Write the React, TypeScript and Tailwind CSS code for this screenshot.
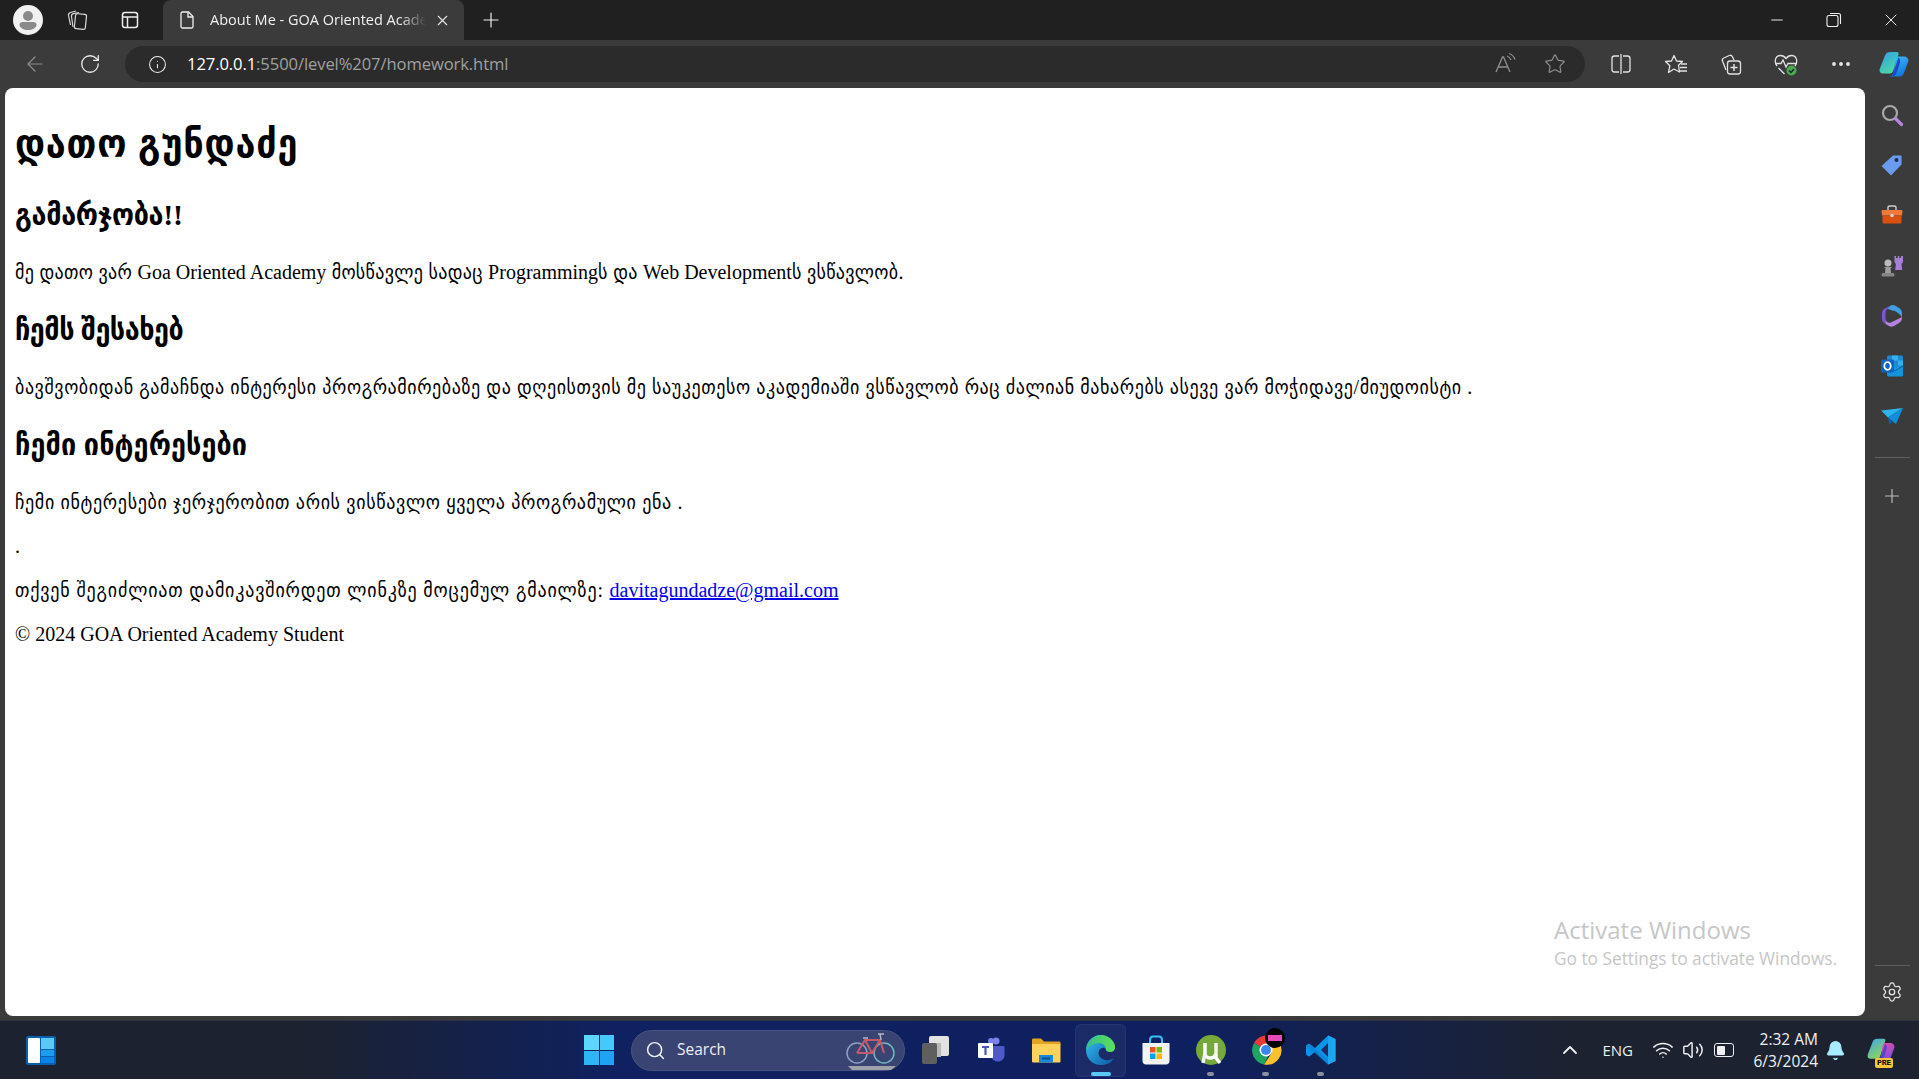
import { ArrowLeft, ChevronUp, Info, Minus, MoreHorizontal, Plus, RotateCw, Search, Settings, Star, Volume2, Wifi, X, Bell } from 'lucide-react'
import type { ReactNode } from 'react'

const uiFont = "font-['Open_Sans','Noto_Sans',sans-serif]"

function ToolSlot({ children, w = 'w-[55px]' }: { children: ReactNode; w?: string }) {
  return <div className={`${w} h-full flex items-center justify-center flex-shrink-0`}>{children}</div>
}

function Svg({ size = 24, children, box = '0 0 24 24' }: { size?: number; children: ReactNode; box?: string }) {
  return <svg width={size} height={size} viewBox={box} fill="none">{children}</svg>
}

function TitleBar() {
  return (
    <div className="h-10 bg-[#202020] flex items-end flex-shrink-0 text-white">
      <div className="w-[56px] h-10 flex items-center justify-center">
        <Svg size={30} box="0 0 30 30">
          <circle cx="15" cy="15" r="15" fill="#f2f2f2" />
          <circle cx="15" cy="11" r="5" fill="#8a8a8a" />
          <path d="M6.5 19.5c0-1.500 1.500-2.500 3-2.500h11c1.500 0 3 1 3 2.500 0 3.500-4 5.500-8.500 5.500s-8.500-2-8.500-5.500z" fill="#8a8a8a" />
        </Svg>
      </div>
      <div className="w-[44px] h-10 flex items-center justify-center">
        <Svg size={24}>
          <rect x="9" y="6" width="11" height="15" rx="2" stroke="#d8d8d8" strokeWidth="1.200" transform="rotate(6 14 13)" />
          <path d="M7 19 5.500 8.500c-.2-1.500.5-2.500 2-2.800L13 4.500" stroke="#d8d8d8" strokeWidth="1.200" />
          <path d="M4.500 17 2.500 7.500C2.200 6 3 5 4.500 4.500L10 3" stroke="#d8d8d8" strokeWidth="1.200" />
        </Svg>
      </div>
      <div className="w-[60px] mr-[3px] h-10 flex items-center justify-center">
        <Svg size={20} box="0 0 20 20">
          <rect x="2.500" y="2.500" width="15" height="15" rx="2.500" stroke="#ededed" strokeWidth="1.500" />
          <path d="M3 7h14" stroke="#ededed" strokeWidth="1.500" />
          <path d="M7.500 7v10" stroke="#ededed" strokeWidth="1.500" />
        </Svg>
      </div>
      <div className="w-[301px] h-10 bg-[#3b3b3b] rounded-t-lg flex items-center pl-[14px] pr-[9px] flex-shrink-0">
        <Svg size={20} box="0 0 20 20">
          <path d="M4 3.500c0-.8.700-1.500 1.500-1.500h6L16 6.500v10c0 .8-.7 1.500-1.500 1.500h-9c-.8 0-1.500-.7-1.500-1.500z" stroke="#f0f0f0" strokeWidth="1.300" />
          <path d="M11 2v5h5" stroke="#f0f0f0" strokeWidth="1.300" />
        </Svg>
        <div className={`${uiFont} ml-[13px] w-[216px] overflow-hidden whitespace-nowrap text-[14.500px] leading-[22px] text-[#f0f0f0] [mask-image:linear-gradient(90deg,#000_88%,transparent)]`}>
          About Me - GOA Oriented Academy Student
        </div>
        <X className="ml-[8px] w-[17px] h-[17px] text-[#e8e8e8]" strokeWidth={1.500} />
      </div>
      <div className="w-[54px] h-10 flex items-center justify-center">
        <Plus className="w-[24px] h-[24px] text-[#f0f0f0]" strokeWidth={1.200} />
      </div>
      <div className="flex-1" />
      <div className="h-10 flex items-center">
        <ToolSlot w="w-[57px]"><Minus className="w-[18px] h-[18px]" strokeWidth={1.200} /></ToolSlot>
        <ToolSlot w="w-[58px]">
          <Svg size={16} box="0 0 16 16">
            <rect x="1" y="3.500" width="11" height="11" rx="2" stroke="#f0f0f0" strokeWidth="1.100" />
            <path d="M4 1.500h8.500c1.200 0 2 .8 2 2V12" stroke="#f0f0f0" strokeWidth="1.100" />
          </Svg>
        </ToolSlot>
        <ToolSlot w="w-[56px]"><X className="w-[20px] h-[20px]" strokeWidth={1.100} /></ToolSlot>
      </div>
    </div>
  )
}

function CopilotLogo({ size = 30, pre }: { size?: number; pre?: boolean }) {
  const a = pre ? 'copPreA' : 'copA'
  const b = pre ? 'copPreB' : 'copB'
  return (
    <Svg size={size} box="0 0 30 30">
      <defs>
        <linearGradient id={a} x1="0" y1="0" x2="0.6" y2="1">
          <stop offset="0" stopColor={pre ? '#38a8f0' : '#2d9ee8'} />
          <stop offset="1" stopColor={pre ? '#8ed45a' : '#4fd8a4'} />
        </linearGradient>
        <linearGradient id={b} x1="0" y1="0" x2="0.5" y2="1">
          <stop offset="0" stopColor={pre ? '#f0509a' : '#3ec4f6'} />
          <stop offset="1" stopColor={pre ? '#7a4ee0' : '#1478e0'} />
        </linearGradient>
      </defs>
      <path d="M11 3h7c1.500 0 2 1 1.500 2.500L14 22c-.5 1.500-1.500 2.500-3 2.500H4c-2.500 0-4-2-3.300-4.500L6 6.500C6.800 4 8.500 3 11 3z" fill={`url(#${a})`} />
      <path d="M19 7.500h6c3 0 5 2.500 4.300 5L25 24c-.7 2-2.500 3.500-4.500 3.500H9.500c2.500 0 4-1 4.800-3.500L17 9.500c.3-1 1-2 2-2z" fill={`url(#${b})`} />
      <path d="M19.500 8.500c1.500 1 2 3 1.500 5L18 23c-.7 2.500-2.500 4.500-6 4.500h-2.500c2.500 0 4-1 4.800-3.500z" fill={pre ? '#5a3ed0' : '#1d48c8'} />
    </Svg>
  )
}

function NavBar() {
  return (
    <div className="h-12 bg-[#3b3b3b] flex items-center flex-shrink-0">
      <ToolSlot w="w-[69px]"><ArrowLeft className="w-[24px] h-[24px] text-[#8c8c8c]" strokeWidth={1.200} /></ToolSlot>
      <ToolSlot w="w-[42px]"><RotateCw className="w-[22px] h-[22px] text-[#eeeeee]" strokeWidth={1.400} /></ToolSlot>
      <div className="ml-[14px] w-[1460px] flex-shrink-0 h-[36px] rounded-full bg-[#2b2b2b] flex items-center pl-[23px] pr-[19px]">
        <Info className="w-[19px] h-[19px] text-[#eeeeee]" strokeWidth={1.300} />
        <div className={`${uiFont} ml-[20px] text-[16.600px] tracking-[-0.1px] whitespace-nowrap text-[#a0a0a0]`}>
          <span className="text-white">127.0.0.1</span>:5500/level%207/homework.html
        </div>
        <div className="flex-1" />
        <Svg size={24}>
          <path d="M3 20 9.500 5h1L17 20M5.500 15h9" stroke="#8e8e8e" strokeWidth="1.300" />
          <path d="M14 4c2 .7 3.300 2 4 4M16 1.500c3 1 5 3 6 6" stroke="#8e8e8e" strokeWidth="1.300" />
        </Svg>
        <div className="ml-[27px]"><Star className="w-[22px] h-[22px] text-[#8e8e8e]" strokeWidth={1.300} /></div>
      </div>
      <div className="ml-[8px] flex items-center h-full">
        <ToolSlot>
          <Svg size={24}>
            <path d="M10 4H5.500C4 4 3 5 3 6.500v11C3 19 4 20 5.500 20H10M14 4h4.500C20 4 21 5 21 6.500v11c0 1.500-1 2.500-2.500 2.500H14M12 2v20" stroke="#e2e2e2" strokeWidth="1.300" />
          </Svg>
        </ToolSlot>
        <ToolSlot>
          <Svg size={24}>
            <path d="M10 3.500 12.500 9l6 .5-4 3.800L15.500 20 10 17l-5.500 3.500 1.400-6.800L1.500 9.500 7.500 9z" stroke="#e2e2e2" strokeWidth="1.300" strokeLinejoin="round" />
            <path d="M17 12h6M16 15.500h7M15 19h8" stroke="#e2e2e2" strokeWidth="1.300" />
          </Svg>
        </ToolSlot>
        <ToolSlot>
          <Svg size={24}>
            <path d="M7 18 3.500 9c-.5-1.300 0-2.500 1.300-3l5.500-2.500c1.300-.5 2.500 0 3 1L15 8" stroke="#e2e2e2" strokeWidth="1.300" />
            <rect x="8.500" y="9" width="13" height="13" rx="2.500" stroke="#e2e2e2" strokeWidth="1.300" />
            <path d="M15 12v7M11.500 15.500h7" stroke="#e2e2e2" strokeWidth="1.500" />
          </Svg>
        </ToolSlot>
        <ToolSlot>
          <Svg size={26} box="0 0 26 26">
            <path d="M4 15C1 11 2 5 7 4.500c2.500-.2 4.500 1 6 3 1.500-2 3.500-3.200 6-3 5 .5 6 6.500 3 10.500" stroke="#e2e2e2" strokeWidth="1.300" />
            <path d="M2 12.500h6l2-3.500 3 7 2-3.500h8M5.500 17l6 6" stroke="#e2e2e2" strokeWidth="1.300" />
            <circle cx="18.500" cy="19.500" r="5" fill="#4aa84f" />
            <path d="m16 19.500 2 2 3-3.500" stroke="#123" strokeWidth="1.300" />
          </Svg>
        </ToolSlot>
        <ToolSlot><MoreHorizontal className="w-[24px] h-[24px] text-[#e6e6e6]" strokeWidth={1.800} /></ToolSlot>
        <ToolSlot w="w-[51px]"><CopilotLogo /></ToolSlot>
      </div>
    </div>
  )
}

function SideIcon({ children }: { children: ReactNode }) {
  return <div className="h-[50.200px] w-full flex items-center justify-center flex-shrink-0">{children}</div>
}

function SideBar() {
  return (
    <div className="w-[54px] flex-shrink-0 bg-[#3b3b3b] flex flex-col items-center pt-[2px]">
      <SideIcon>
        <Svg size={24}>
          <circle cx="10" cy="10" r="7" stroke="#a8a8a8" strokeWidth="2.200" />
          <path d="m15.500 15.500 6 6" stroke="#b287dc" strokeWidth="3.200" strokeLinecap="round" />
        </Svg>
      </SideIcon>
      <SideIcon>
        <Svg size={24}>
          <path d="M13 2.500h8.500v9L11 22.500 1.500 13z" fill="#6a9bee" strokeLinejoin="round" />
          <circle cx="16.500" cy="7" r="2" fill="#1c2c55" />
        </Svg>
      </SideIcon>
      <SideIcon>
        <Svg size={24}>
          <path d="M8 7V4.500C8 3.500 9 3 10 3h4c1 0 2 .5 2 1.500V7" stroke="#cfcfcf" strokeWidth="1.400" />
          <path d="M1.500 8.500C1.500 7.500 2 7 3 7h18c1 0 1.500.5 1.500 1.500l-.5 4H2z" fill="#ef7a3a" />
          <path d="M2.500 12.500h19V19c0 1-.5 1.500-1.500 1.500H4c-1 0-1.500-.5-1.500-1.500z" fill="#d9500f" />
          <circle cx="12" cy="12.500" r="1.800" fill="#d5d5d5" />
        </Svg>
      </SideIcon>
      <SideIcon>
        <Svg size={24}>
          <path d="M14.500 2h1.500v2h1.800V2h1.500v2h1.700V2H23v6l-1.500 2 .7 6h-7l.7-6-1.400-2z" fill="#a77fd9" />
          <circle cx="8" cy="9" r="3.500" fill="#bbbbbb" />
          <path d="M4.500 13.500h7M6 14l-.5 5h5L10 14z" fill="#9d9d9d" stroke="#9d9d9d" />
          <rect x="1.500" y="19" width="13" height="3.500" rx="1.500" fill="#858585" />
        </Svg>
      </SideIcon>
      <SideIcon>
        <Svg size={24}>
          <path d="M10.500 1.500 5 4.500C3 5.500 2 7 2 9v6c0 2 1 3.500 3 4.500l.5.300V9c0-2 1-3.500 2.500-4.500z" fill="#7a55d6" />
          <path d="M10.500 1.500c1.500-.7 3-.7 4.500 0l4 2.500c2 1 3 3 3 5v5c-.5-2-1.500-3-3-4L12 6.500C10.500 5.500 9 5 7.500 5z" fill="#3f9fe2" />
          <path d="M5.500 15c0 3 3.500 4.500 5.500 3.500L22 13c0 3-.5 4.500-3 6l-5 3c-2 1-3.500 1-5 0l-3.500-2z" fill="#b684e0" />
          <path d="M8.500 9 14 6.500c1.500 1 4 2 4.500 3.500L13 13.500c-.5-2-3-3-4.500-4.500z" fill="#3c3c3c" />
        </Svg>
      </SideIcon>
      <SideIcon>
        <Svg size={24}>
          <rect x="7" y="1.500" width="16" height="15" rx="1.500" fill="#1a8ad6" />
          <path d="M12 1.500h6v5h-6zM18 6.500h5v5h-5z" fill="#38b0ea" />
          <path d="M7 12h16v9c0 .8-.7 1.500-1.500 1.500h-13C7.700 22.500 7 21.800 7 21z" fill="#1793de" />
          <path d="m7 12 8 5 8-5" stroke="#0d5eae" strokeWidth="1" />
          <rect x="1" y="5.500" width="13" height="13" rx="1.500" fill="#0a64c0" />
          <ellipse cx="7.500" cy="12" rx="3.200" ry="3.800" stroke="#ffffff" strokeWidth="1.800" />
        </Svg>
      </SideIcon>
      <SideIcon>
        <Svg size={24}>
          <path d="M1 6.500 23 4 8 13.500z" fill="#2db4ee" />
          <path d="M23 4 8 13.500 16 20z" fill="#0f8edc" />
          <path d="m8 13.500 1.500 7.500 3-3.500z" fill="#0b5fb4" />
        </Svg>
      </SideIcon>
      <div className="w-[35px] h-px bg-[#5f5f5f] mt-[16px]" />
      <div className="mt-[27px]"><Plus className="w-[22px] h-[22px] text-[#bdbdbd]" strokeWidth={1.300} /></div>
      <div className="flex-1" />
      <div className="w-[35px] h-px bg-[#5f5f5f]" />
      <div className="mt-[15px] mb-[13px]"><Settings className="w-[22px] h-[22px] text-[#ededed]" strokeWidth={1.300} /></div>
    </div>
  )
}

// Latin runs keep the serif's normal spacing, only the Georgian runs are tracked out
function Lat({ children }: { children: ReactNode }) {
  return <span className="tracking-normal">{children}</span>
}

function Content() {
  const heading = 'font-bold text-[30px] leading-[41px] mt-[25px] mb-[25px]'
  const para = 'text-[20px] leading-[24px] mt-[20px] mb-[20px]'
  return (
    <div className="relative flex-1 bg-white rounded-lg px-[10px] py-[1px] font-['Liberation_Serif','DejaVu_Sans',serif] font-stretch-condensed text-black overflow-hidden">
      <h1 className="font-bold text-[40px] leading-[47px] mt-[31px] mb-[27px] tracking-[0.8px]">დათო გუნდაძე</h1>
      <h2 className={`${heading} tracking-[-0.3px]`}>გამარჯობა!!</h2>
      <p className={`${para} tracking-[0.32px]`}>მე დათო ვარ <Lat>Goa Oriented Academy</Lat> მოსწავლე სადაც <Lat>Programming</Lat>ს და <Lat>Web Development</Lat>ს ვსწავლობ.</p>
      <h2 className={`${heading} tracking-[-0.5px]`}>ჩემს შესახებ</h2>
      <p className={`${para} tracking-[0.58px]`}>ბავშვობიდან გამაჩნდა ინტერესი პროგრამირებაზე და დღეისთვის მე საუკეთესო აკადემიაში ვსწავლობ რაც ძალიან მახარებს ასევე ვარ მოჭიდავე/მიუდოისტი .</p>
      <h2 className={`${heading} tracking-[0.1px]`}>ჩემი ინტერესები</h2>
      <p className={`${para} tracking-[0.66px]`}>ჩემი ინტერესები ჯერჯერობით არის ვისწავლო ყველა პროგრამული ენა .</p>
      <p className={para}>.</p>
      <p className={`${para} tracking-[0.83px]`}>თქვენ შეგიძლიათ დამიკავშირდეთ ლინკზე მოცემულ გმაილზე: <a href="#" className="text-[#0000ee] underline tracking-normal">davitagundadze@gmail.com</a></p>
      <p className={para}>© 2024 GOA Oriented Academy Student</p>
      <div className={`${uiFont} font-stretch-normal absolute left-[1549px] top-[825px] text-[#c6c6c6] whitespace-nowrap`}>
        <div className="text-[24px] leading-[34px]">Activate Windows</div>
        <div className="text-[17.300px] leading-[24px]">Go to Settings to activate Windows.</div>
      </div>
    </div>
  )
}

function Taskbar() {
  return (
    <div className="h-[59px] flex-shrink-0 flex items-center bg-[linear-gradient(90deg,#1c2230_0%,#1c2230_16%,#0f2160_32%,#0e2060_62%,#1c2230_82%,#1c2230_100%)] text-white border-t border-[#2f3442]">
      <div className="ml-[26px] w-[30px] h-[29px] rounded-[2px] bg-[#0b5fb0] flex p-[2px] gap-[1px] flex-shrink-0">
        <div className="w-[12px] bg-white rounded-[1px]" />
        <div className="flex-1 flex flex-col gap-[1px]">
          <div className="flex-[2] bg-[#5cc8f8]" />
          <div className="flex-1 bg-[#1d9bf0]" />
          <div className="flex-1 bg-[#0a84e8]" />
        </div>
      </div>
      <div className="ml-[528px] w-[30px] h-[30px] grid grid-cols-2 gap-[1px] flex-shrink-0">
        <div className="bg-[#5cd6fb]" /><div className="bg-[#45c8fa]" />
        <div className="bg-[#2fb4f6]" /><div className="bg-[#1ea4f2]" />
      </div>
      <div className="ml-[17px] w-[274px] h-[41px] rounded-full bg-[#3a4472] border border-[#4a5380] flex items-center pl-[13px] pr-[6px] flex-shrink-0">
        <Search className="w-[21px] h-[21px] text-[#f0f0f0]" strokeWidth={1.700} />
        <span className={`${uiFont} ml-[11px] text-[15.500px] text-[#eceef4]`}>Search</span>
        <div className="flex-1" />
        <div className="opacity-80">
          <Svg size={54} box="0 0 54 40">
            <path d="M4 36h48l-5 4H8z" fill="#b8b8b8" />
            <circle cx="13" cy="23" r="10" stroke="#a0b8d8" strokeWidth="1.500" />
            <circle cx="40" cy="23" r="10" stroke="#7fd0d8" strokeWidth="1.500" />
            <path d="M13 23 21 10h15l4 13M21 10l7 13h-15M36 10l-8 13" stroke="#e8606a" strokeWidth="2" />
            <path d="M34 4h6M36 4l1 6M19 8h5" stroke="#d0d4e0" strokeWidth="1.500" />
          </Svg>
        </div>
      </div>
      <div className="flex items-center h-full ml-[3px]">
        <TaskIcon>
          <Svg size={34} box="0 0 34 34">
            <rect x="10" y="3" width="20" height="20" rx="2" fill="#e2e2e2" />
            <rect x="6" y="10" width="16" height="14" fill="#b8b8b8" />
            <rect x="3" y="10" width="15" height="21" rx="2" fill="#5f5f5f" />
          </Svg>
        </TaskIcon>
        <TaskIcon>
          <Svg size={30} box="0 0 30 30">
            <circle cx="20" cy="6" r="3.500" fill="#7b83eb" />
            <path d="M14 11h13c1 0 1.500.5 1.500 1.500V20c0 4-3 6.500-6.500 6.500S15 24 14 20z" fill="#5059c9" />
            <circle cx="15" cy="6" r="3" fill="#7b83eb" />
            <rect x="2" y="8" width="15" height="15" rx="1" fill="#ffffff" />
            <path d="M6 12h7M9.500 12v8" stroke="#4b53bc" strokeWidth="2.200" />
          </Svg>
        </TaskIcon>
        <TaskIcon>
          <Svg size={32} box="0 0 32 32">
            <path d="M2 6c0-1 .5-1.500 1.500-1.500H11l3 3h15c1 0 1.500.5 1.500 1.500v2H2z" fill="#e0a421" />
            <path d="M2 10h28.500v17c0 1-.5 1.500-1.500 1.500H3.500c-1 0-1.500-.5-1.500-1.500z" fill="#fcd25a" />
            <rect x="9" y="21" width="14" height="7.500" fill="#1a86d8" />
            <rect x="12" y="23.500" width="8" height="2" fill="#0b4d94" />
          </Svg>
        </TaskIcon>
        <TaskIcon active>
          <Svg size={34} box="0 0 34 34">
            <defs>
              <linearGradient id="edge1" x1="0" y1="0" x2="1" y2="1">
                <stop offset="0" stopColor="#35c1f1" />
                <stop offset="1" stopColor="#0c59a4" />
              </linearGradient>
              <linearGradient id="edge2" x1="0" y1="0" x2="1" y2="0">
                <stop offset="0" stopColor="#33bf8c" />
                <stop offset="1" stopColor="#5ee05a" />
              </linearGradient>
            </defs>
            <path d="M17 2C8 2 2 9 2 17c0 9 7 15 15 15 6 0 10-2 13-7-4 3-11 3-14-1-3-4-1-8 2-9 3-1 4 1 4 3l8 0C31 10 26 2 17 2z" fill="url(#edge1)" />
            <path d="M17 2c7 0 13 5 14 11 .6 4-2 6-5 6-3 0-4-1-4-3 0-3-3-6-7-6-5 0-10 3-13 8C3 9 9 2 17 2z" fill="url(#edge2)" />
          </Svg>
        </TaskIcon>
        <TaskIcon>
          <Svg size={32} box="0 0 32 32">
            <path d="M10 9V6c0-2 1-3.500 3-3.500h6c2 0 3 1.500 3 3.500v3" stroke="#35c0f0" strokeWidth="2" />
            <path d="M2.500 9h27v18c0 2-1.500 3.500-3.500 3.500H6c-2 0-3.500-1.500-3.500-3.500z" fill="#f3f3f3" />
            <rect x="10" y="13" width="5.500" height="5.500" fill="#f25022" />
            <rect x="16.500" y="13" width="5.500" height="5.500" fill="#7fba00" />
            <rect x="10" y="19.500" width="5.500" height="5.500" fill="#00a4ef" />
            <rect x="16.500" y="19.500" width="5.500" height="5.500" fill="#ffb900" />
          </Svg>
        </TaskIcon>
        <TaskIcon dot>
          <Svg size={32} box="0 0 32 32">
            <circle cx="16" cy="16" r="15" fill="#77a83a" />
            <path d="M10 9v10c0 3 2 5 5 5s5-2 6-4v4l4 5" stroke="#ffffff" strokeWidth="3.500" />
            <path d="M21 9v11M10 19l-2 10" stroke="#f2f2f2" strokeWidth="3.500" />
          </Svg>
        </TaskIcon>
        <TaskIcon dot>
          <div className="relative w-[32px] h-[32px]">
            <Svg size={32} box="0 0 32 32">
              <path d="M16 16 4 9A14.500 14.500 0 0 1 30 10H16z" fill="#e53d33" />
              <path d="M16 16 4 9a14.500 14.500 0 0 0 10 21.500l6-12z" fill="#1fa463" />
              <path d="M16 10h14a14.500 14.500 0 0 1-16 20.500l8-12z" fill="#fbc02d" />
              <circle cx="16" cy="16" r="6.500" fill="#ffffff" />
              <circle cx="16" cy="16" r="5" fill="#3b86f0" />
            </Svg>
            <div className="absolute -top-[6px] left-[15px] w-[20px] h-[20px] rounded-full bg-black flex items-center justify-center">
              <div className="w-[14px] h-[6px] bg-[#e84ab8]" />
            </div>
          </div>
        </TaskIcon>
        <TaskIcon dot>
          <Svg size={32} box="0 0 32 32">
            <path d="M23 1.500 30.500 5v22L23 30.500 10 18l-6 4.500-3-2V11.500l3-2L10 14z" fill="#0a95e8" />
            <path d="m23 9-7 7 7 7z" fill="#1c2a60" />
            <path d="M23 1.500 30.500 5v22L23 30.500z" fill="#1ba7f0" />
            <path d="m1 11.500 3-2 19 16v5L1 12z" fill="#0c7ccc" opacity="0.500" />
          </Svg>
        </TaskIcon>
      </div>
      <div className="flex-1" />
      <div className="flex items-center h-full">
        <ChevronUp className="w-[24px] h-[24px] text-[#f0f0f0]" strokeWidth={1.800} />
        <span className={`${uiFont} ml-[20px] text-[15px] text-[#f0f0f0]`}>ENG</span>
        <Wifi className="ml-[19px] w-[22px] h-[22px] text-[#f0f0f0]" strokeWidth={1.700} />
        <Volume2 className="ml-[8px] w-[22px] h-[22px] text-[#f0f0f0]" strokeWidth={1.600} />
        <div className="ml-[10px] w-[20px] h-[14px] rounded-[3px] border-[1.500px] border-[#f0f0f0] p-[1.500px]">
          <div className="w-[8px] h-full bg-[#f0f0f0] rounded-[1px]" />
        </div>
        <div className={`${uiFont} ml-[12px] w-[72px] text-right text-[15.500px] leading-[22px] text-[#f0f0f0]`}>
          <div>2:32 AM</div>
          <div>6/3/2024</div>
        </div>
        <Bell className="ml-[7px] w-[21px] h-[21px] text-[#a8ecff] fill-[#a8ecff]" strokeWidth={1.500} />
        <div className="relative ml-[21px] mr-[24px]">
          <CopilotLogo size={28} pre />
          <div className="absolute -bottom-[4px] left-[8px] px-[2px] rounded-[2px] bg-[#f7c53a] text-black text-[8px] leading-[10px] font-bold font-['Liberation_Mono',monospace]">PRE</div>
        </div>
      </div>
    </div>
  )
}

function TaskIcon({ children, active, dot }: { children: ReactNode; active?: boolean; dot?: boolean }) {
  return (
    <div className="relative w-[55px] h-[55px] flex items-center justify-center flex-shrink-0">
      {active && <div className="absolute inset-x-[2px] inset-y-[1px] rounded-md bg-white/5 border border-white/5" />}
      <div className="relative">{children}</div>
      {active && <div className="absolute bottom-[2px] left-[18px] w-[20px] h-[4px] rounded-full bg-[#5cc8f8]" />}
      {dot && <div className="absolute bottom-[2px] left-[24px] w-[7px] h-[4px] rounded-full bg-[#8a8fa0]" />}
    </div>
  )
}

export default function App() {
  return (
    <div className="w-full h-screen flex flex-col overflow-hidden bg-[#3b3b3b]">
      <TitleBar />
      <NavBar />
      <div className="flex-1 min-h-0 flex pl-[5px] pb-[4px]">
        <Content />
        <SideBar />
      </div>
      <Taskbar />
    </div>
  )
}
